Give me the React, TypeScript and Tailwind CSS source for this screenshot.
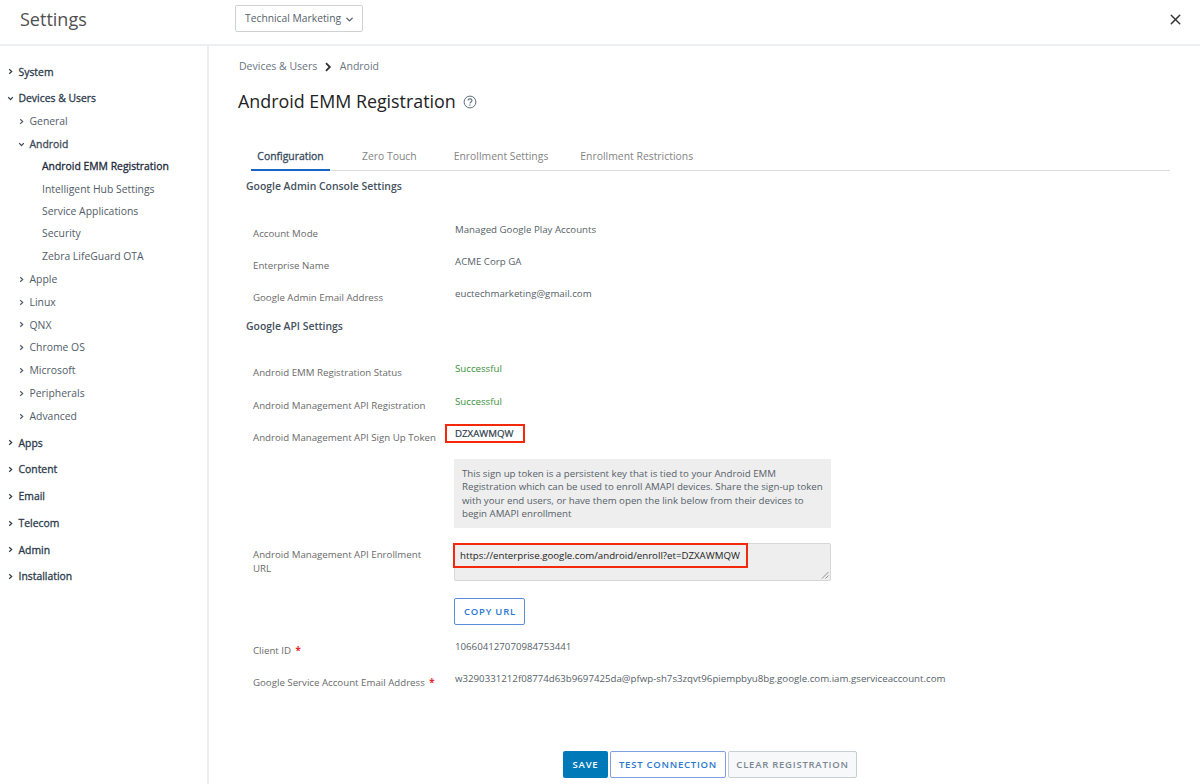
import React from "react";
import { ChevronDown, X } from "lucide-react";

type NavItem = {
  label: string;
  level: "top" | "sub" | "leaf";
  open?: boolean;
  active?: boolean;
};

const navItems: NavItem[] = [
  { label: "System", level: "top" },
  { label: "Devices & Users", level: "top", open: true },
  { label: "General", level: "sub" },
  { label: "Android", level: "sub", open: true },
  { label: "Android EMM Registration", level: "leaf", active: true },
  { label: "Intelligent Hub Settings", level: "leaf" },
  { label: "Service Applications", level: "leaf" },
  { label: "Security", level: "leaf" },
  { label: "Zebra LifeGuard OTA", level: "leaf" },
  { label: "Apple", level: "sub" },
  { label: "Linux", level: "sub" },
  { label: "QNX", level: "sub" },
  { label: "Chrome OS", level: "sub" },
  { label: "Microsoft", level: "sub" },
  { label: "Peripherals", level: "sub" },
  { label: "Advanced", level: "sub" },
  { label: "Apps", level: "top" },
  { label: "Content", level: "top" },
  { label: "Email", level: "top" },
  { label: "Telecom", level: "top" },
  { label: "Admin", level: "top" },
  { label: "Installation", level: "top" },
];

const levelClasses = {
  top: "h-[26.75px] pl-[7px] text-[#2b3a4a] [-webkit-text-stroke:0.3px]",
  sub: "h-[22.9px] pl-[18px] text-[#515c68]",
  leaf: "h-[22.3px] pl-[42px] text-[#515c68]",
};

const Caret = ({ open }: { open?: boolean }) => (
  <svg
    viewBox="0 0 7 7"
    className={`-mt-px mr-[4.5px] size-[7px] shrink-0 ${open ? "rotate-90" : ""}`}
    fill="none"
    stroke="currentColor"
    strokeWidth="1.2"
  >
    <path d="M2.2 1.2 4.7 3.5 2.2 5.8" />
  </svg>
);

const Sidebar = () => {
  return (
    <nav className="w-[209px] shrink-0 border-r-2 border-[#edf0f3] pt-[13px] text-[10.4px]">
      {navItems.map(({ label, level, open, active }) => (
        <div
          key={label}
          className={`flex items-center whitespace-nowrap ${levelClasses[level]} ${
            active ? "!text-[#1b2a3a] [-webkit-text-stroke:0.3px]" : ""
          } ${open && level === "sub" ? "!text-[#3d4955] [-webkit-text-stroke:0.3px]" : ""} ${
            label === "General" ? "-mt-[2.2px]" : ""
          } ${label === "Apple" ? "mt-[0.6px]" : ""} ${label === "Apps" ? "mt-[1.6px]" : ""}`}
        >
          {level !== "leaf" && <Caret open={open} />}
          {label}
        </div>
      ))}
    </nav>
  );
};

const Header = () => {
  return (
    <header className="flex h-[46px] shrink-0 border-b-2 border-[#edf0f3]">
      <h1 className="w-[235px] pt-[6px] pl-5 text-[18px] leading-[26px] text-[#505050]">
        Settings
      </h1>
      <button className="mt-[5px] flex h-[27px] w-32 items-center rounded-xs border border-[#cfd2d5] pl-[9px] text-[10.3px] text-[#565f69]">
        Technical Marketing
        <ChevronDown className="mt-px ml-[3px] size-[11px]" strokeWidth={3} />
      </button>
      <button className="mt-[11px] mr-4 ml-auto size-[17px] text-[#333]">
        <X className="size-[17px]" strokeWidth={2} />
      </button>
    </header>
  );
};

const tabs = [
  { label: "Configuration", className: "w-[79px]" },
  { label: "Zero Touch", className: "ml-[32px]" },
  { label: "Enrollment Settings", className: "ml-[37px]" },
  { label: "Enrollment Restrictions", className: "ml-[32px]" },
];

const Tabs = () => {
  return (
    <div className="mt-[30px] ml-[13px] flex h-[27px] w-[919px] border-b border-[#dcdcdc] text-[10.4px] text-[#848484]">
      {tabs.map((tab, i) => (
        <div
          key={tab.label}
          className={`h-[27px] text-center leading-[25px] whitespace-nowrap ${tab.className} ${
            i === 0
              ? "border-b-2 border-[#1a65c4] text-[#34495c] [-webkit-text-stroke:0.3px]"
              : ""
          }`}
        >
          {tab.label}
        </div>
      ))}
    </div>
  );
};

type RowProps = {
  label?: React.ReactNode;
  className: string;
  children: React.ReactNode;
};

const Row = ({ label, className, children }: RowProps) => (
  <div className={`flex pl-[15px] ${className}`}>
    <div className="w-[202px] shrink-0 pt-1 leading-4 whitespace-nowrap text-[#6a6a6a]">
      {label}
    </div>
    <div className="leading-4 whitespace-nowrap">{children}</div>
  </div>
);

const Required = () => <span className="ml-0.5 font-bold text-[#e3262d]"> *</span>;

const Highlight = ({ className }: { className: string }) => (
  <span className={`absolute border-[#f4280b] ${className}`} />
);

const Form = () => {
  return (
    <div className="text-[9.7px] text-[#565f69]">
      <h3 className="mt-[7px] ml-2 h-[44px] text-[10.4px] leading-4 font-semibold text-[#44515e]">
        Google Admin Console Settings
      </h3>
      <Row label="Account Mode" className="h-8">
        Managed Google Play Accounts
      </Row>
      <Row label="Enterprise Name" className="h-8">
        ACME Corp GA
      </Row>
      <Row label="Google Admin Email Address" className="h-8">
        euctechmarketing@gmail.com
      </Row>
      <h3 className="ml-2 h-[43px] text-[10.4px] leading-4 font-semibold text-[#44515e]">
        Google API Settings
      </h3>
      <Row label="Android EMM Registration Status" className="h-[33px]">
        <span className="text-[#39913b]">Successful</span>
      </Row>
      <Row label="Android Management API Registration" className="h-8">
        <span className="text-[#39913b]">Successful</span>
      </Row>
      <Row label="Android Management API Sign Up Token" className="h-[33px]">
        <div className="relative text-[#2b3a4a] [-webkit-text-stroke:0.2px]">
          DZXAWMQW
          <Highlight className="-top-0.5 -left-2.5 h-[19px] w-20 border-2" />
        </div>
      </Row>
      <Row className="h-[84px]">
        <p className="-ml-px h-[69px] w-[377px] bg-[#eee] pt-[7.6px] pl-2 leading-[13.6px]">
          This sign up token is a persistent key that is tied to your Android EMM
          <br />
          Registration which can be used to enroll AMAPI devices. Share the sign-up token
          <br />
          with your end users, or have them open the link below from their devices to
          <br />
          begin AMAPI enrollment
        </p>
      </Row>
      <Row
        className="h-[55px]"
        label={
          <div className="pt-px leading-[13.6px]">
            Android Management API Enrollment
            <br />
            URL
          </div>
        }
      >
        <div className="relative -ml-px flex h-[38px] w-[377px] rounded-xs border border-[#d6d6d6] bg-[#eee] pt-1 pl-[5px] text-[#222]">
          https://enterprise.google.com/android/enroll?et=DZXAWMQW
          <Highlight className="-top-px -left-0.5 h-[25px] w-[295px] border-2" />
          <svg
            viewBox="0 0 8 8"
            className="mr-px mb-px ml-auto size-2 self-end"
            fill="none"
            stroke="#777"
            strokeWidth="0.8"
          >
            <path d="M1 7.5 7.5 1M4.5 7.5 7.5 4.5" />
          </svg>
        </div>
      </Row>
      <Row className="h-[41px]">
        <button className="-ml-px h-[27px] w-[71px] rounded-xs border border-[#5b8fd9] pl-px text-[9.5px] font-semibold tracking-[0.8px] text-[#2a78cf]">
          COPY URL
        </button>
      </Row>
      <Row
        className="h-8"
        label={
          <>
            Client ID <Required />
          </>
        }
      >
        106604127070984753441
      </Row>
      <Row
        className="h-8"
        label={
          <>
            Google Service Account Email Address <Required />
          </>
        }
      >
        w3290331212f08774d63b9697425da@pfwp-sh7s3zqvt96piempbyu8bg.google.com.iam.gserviceaccount.com
      </Row>
    </div>
  );
};

const Footer = () => {
  return (
    <div className="mt-[48px] ml-[325px] flex gap-[2px] text-[9.5px] font-semibold tracking-[0.76px]">
      <button className="h-[27px] w-[45px] rounded-xs bg-[#0079b8] pt-px text-white">
        SAVE
      </button>
      <button className="h-[27px] w-[116px] rounded-xs border border-[#7fa0e0] pt-px text-[#2a78cf]">
        TEST CONNECTION
      </button>
      <button className="h-[27px] w-[129px] rounded-xs border border-[#c6cfd8] bg-[#f7f8f9] pt-px text-[#7b8794]">
        CLEAR REGISTRATION
      </button>
    </div>
  );
};

export default function App() {
  return (
    <div className="flex h-[784px] w-[1200px] flex-col overflow-hidden bg-white font-['Open_Sans',sans-serif]">
      <Header />
      <div className="flex flex-1">
        <Sidebar />
        <main className="flex-1 pl-[29px]">
          <div className="mt-[12px] ml-px flex h-4 items-center text-[10.5px] leading-4 text-[#6a747e]">
            Devices & Users
            <svg
              viewBox="0 0 8 10"
              className="mr-[8px] ml-[6.5px] mt-0.5 h-2.5 w-2"
              fill="none"
              stroke="#333"
              strokeWidth="1.8"
            >
              <path d="M2 1.2 5.8 5 2 8.8" />
            </svg>
            Android
          </div>
          <div className="mt-[14px] flex h-[26px] items-center gap-2 text-[17.85px] text-[#222]">
            Android EMM Registration
            <svg
              viewBox="0 0 14 14"
              className="mt-px -ml-px size-3.5"
              fill="none"
              stroke="#5f6f7c"
            >
              <circle cx="7" cy="7" r="5.9" />
              <path
                d="M5 5.6C5 3.3 9 3.3 9 5.6 9 7 7 6.9 7 8.5M7 9.6v1.2"
                strokeWidth="1.1"
              />
            </svg>
          </div>
          <Tabs />
          <Form />
          <Footer />
        </main>
      </div>
    </div>
  );
}
